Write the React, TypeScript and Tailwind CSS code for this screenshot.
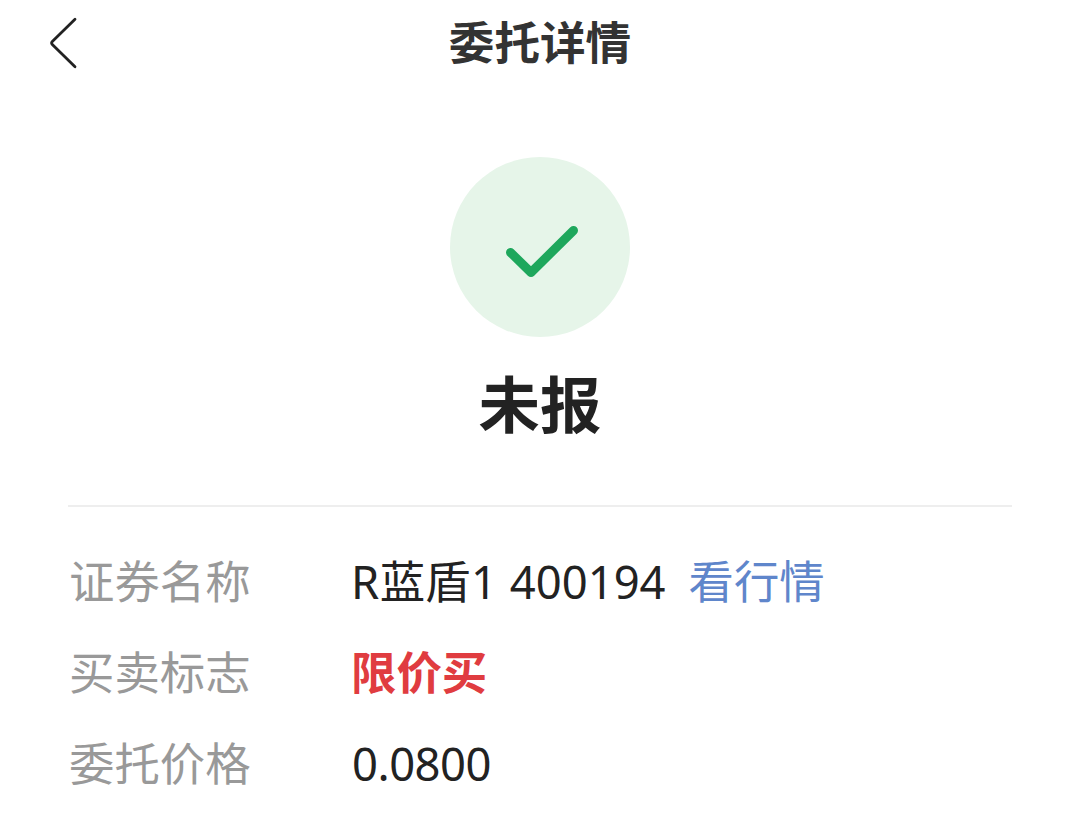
import React from 'react';

const rows = [
  {
    label: '证券名称',
    value: (
      <>
        <span className="text-[#222222] [word-spacing:1px]">
          R<span className="mx-[0.5px]">蓝盾</span>1 400194
        </span>
        <a className="ml-[23px] text-[#5f86cb]">看行情</a>
      </>
    ),
  },
  {
    label: '买卖标志',
    value: <span className="font-bold text-[#e03c40]">限价买</span>,
  },
  {
    label: '委托价格',
    value: <span className="ml-px tracking-[-0.5px] text-[#222222]">0.0800</span>,
  },
];

const App: React.FC = () => {
  return (
    <div className="flex h-[824px] w-[1080px] flex-col overflow-hidden bg-white font-['Noto_Sans','Noto_Sans_CJK_SC',sans-serif]">
      <header className="grid h-[85px] grid-cols-[100px_1fr_100px] items-center">
        <button className="pl-[48px]" aria-label="back">
          <svg width="32" height="56" viewBox="0 0 32 56" fill="none">
            <path
              d="M27 4.3L4.3 26.5Q2.8 28 4.3 29.5L27 51.7"
              stroke="#222222"
              strokeWidth="2.8"
              strokeLinecap="round"
              strokeLinejoin="round"
            />
          </svg>
        </button>
        <h1 className="text-center text-[45.6px] leading-[85px] font-bold text-[#333333]">委托详情</h1>
      </header>

      <section className="flex flex-col items-center pt-[72px]">
        <div className="flex size-[180px] items-center justify-center rounded-full bg-[#e6f5e9]">
          <svg width="180" height="180" viewBox="0 0 180 180" fill="none">
            <path
              d="M60.5 95.5L81 115.5L123.5 73.5"
              stroke="#1ea75c"
              strokeWidth="9"
              strokeLinecap="round"
              strokeLinejoin="round"
            />
          </svg>
        </div>
        <h2 className="mt-[22px] text-[61.5px] leading-[90px] font-bold text-[#222222]">未报</h2>
      </section>

      <dl className="mx-[68px] mt-[56px] border-t-2 border-[#eeeeee] pt-[29px]">
        {rows.map((row) => (
          <div key={row.label} className="flex h-[91px] items-center pl-px text-[45.4px] leading-[91px] whitespace-nowrap">
            <dt className="w-[282px] text-[#999999]">{row.label}</dt>
            <dd>{row.value}</dd>
          </div>
        ))}
      </dl>
    </div>
  );
};

export default App;
